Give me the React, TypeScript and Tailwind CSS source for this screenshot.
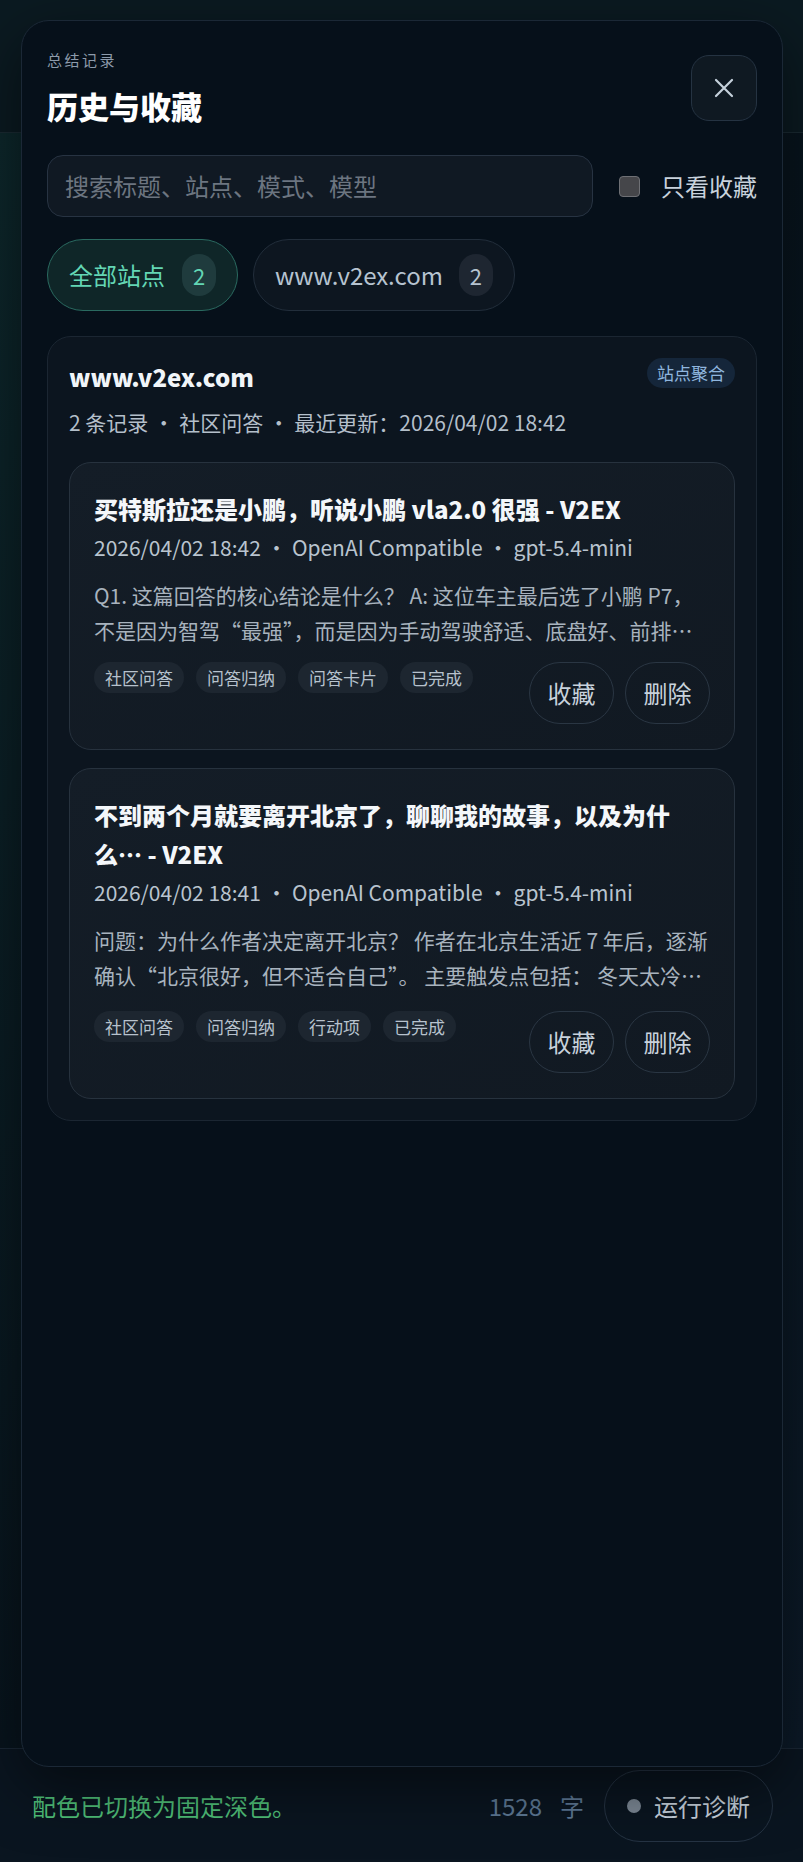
import React from "react";

const FONT = { fontFamily: '"Noto Sans CJK SC", "Noto Sans", sans-serif' };

function Sep() {
  return <span className="mx-[5px]">·</span>;
}

type Entry = {
  title: string;
  time: string;
  summary: string;
  tags: string[];
  tagGap: string;
};

const entries: Entry[] = [
  {
    title: "买特斯拉还是小鹏，听说小鹏 vla2.0 很强 - V2EX",
    time: "2026/04/02 18:42",
    summary:
      "Q1. 这篇回答的核心结论是什么？ A: 这位车主最后选了小鹏 P7，不是因为智驾“最强”，而是因为手动驾驶舒适、底盘好、前排…",
    tags: ["社区问答", "问答归纳", "问答卡片", "已完成"],
    tagGap: "mt-[14px]",
  },
  {
    title: "不到两个月就要离开北京了，聊聊我的故事，以及为什么… - V2EX",
    time: "2026/04/02 18:41",
    summary:
      "问题：为什么作者决定离开北京？ 作者在北京生活近 7 年后，逐渐确认“北京很好，但不适合自己”。 主要触发点包括： 冬天太冷…",
    tags: ["社区问答", "问答归纳", "行动项", "已完成"],
    tagGap: "mt-[18px]",
  },
];

function EntryCard({ e }: { e: Entry }) {
  return (
    <div className="rounded-[22px] border border-[#27323e] bg-gradient-to-br from-[#141d27] to-[#111922] px-[24px] pt-[26px] pb-[25px]">
      <div className="text-[24px] font-extrabold leading-[39px] text-[#f4f7fa]">{e.title}</div>
      <div className="mt-[2px] text-[21px] leading-[34px] text-[#b9c4cf]">
        {e.time}
        <Sep />
        OpenAI Compatible
        <Sep />
        gpt-5.4-mini
      </div>
      <div className="mt-[14px] text-[21px] leading-[35px] text-[#a8b3be]">{e.summary}</div>
      <div className={`${e.tagGap} flex items-start justify-between`}>
        <div className="flex flex-wrap gap-[12px]">
          {e.tags.map((t) => (
            <span
              key={t}
              className="h-[31px] rounded-full bg-[#1d2630] px-[11px] text-[17px] leading-[31px] text-[#b7c2cd]"
            >
              {t}
            </span>
          ))}
        </div>
        <div className="flex gap-[11px]">
          <button className="h-[62px] w-[85px] rounded-full border border-[#2a3643] text-[24px] text-[#c8d2dc]">
            收藏
          </button>
          <button className="h-[62px] w-[85px] rounded-full border border-[#2a3643] text-[24px] text-[#c8d2dc]">
            删除
          </button>
        </div>
      </div>
    </div>
  );
}

export default function App() {
  return (
    <div className="relative flex h-[1862px] w-[803px] flex-col overflow-hidden bg-[#08131c]" style={FONT}>
      {/* background page */}
      <div className="h-[133px] border-b border-[#1a2a32] bg-[#0b1a21]" />
      <div className="flex-1 bg-gradient-to-br from-[#0d272b] via-[#08141d] to-[#0c1a28]" />
      <footer className="flex h-[114px] items-center border-t border-[#1a2735] bg-[#0a1520] pl-[32px] pr-[30px]">
        <div className="flex-1 text-[24px] text-[#4fbf78]">配色已切换为固定深色。</div>
        <div className="flex items-center gap-[18px] text-[24px] text-[#5d7894]">
          <span>1528</span>
          <span>字</span>
        </div>
        <button className="ml-[20px] flex h-[72px] w-[169px] items-center rounded-full border border-[#253343] pl-[22px]">
          <span className="h-[14px] w-[14px] rounded-full bg-[#7b8794]" />
          <span className="ml-[13px] text-[24px] text-[#c8d3de]">运行诊断</span>
        </button>
      </footer>

      {/* modal */}
      <div className="absolute left-[21px] top-[20px] h-[1747px] w-[762px] rounded-[28px] border border-[#1b2836] bg-[#06101a] px-[25px] pt-[29px] shadow-[0_20px_60px_rgba(0,0,0,0.5)]">
        <div className="flex items-center justify-between">
          <div>
            <div className="text-[15px] leading-[20px] tracking-[2.5px] text-[#8d9bab]">总结记录</div>
            <div className="mt-[16px] text-[31px] font-extrabold leading-[40px] text-white">历史与收藏</div>
          </div>
          <button className="flex h-[66px] w-[66px] items-center justify-center rounded-[18px] border border-[#253342] bg-[#0f1922]">
            <svg width="20" height="20" viewBox="0 0 20 20" fill="none" stroke="#c5d1dc" strokeWidth="2.2" strokeLinecap="round">
              <path d="M2 2L18 18M18 2L2 18" />
            </svg>
          </button>
        </div>

        <div className="mt-[29px] flex items-center">
          <div className="flex h-[62px] flex-1 items-center rounded-[16px] border border-[#273342] bg-[#101923] px-[17px] text-[24px] text-[#6c7580]">
            搜索标题、站点、模式、模型
          </div>
          <div className="ml-[26px] flex items-center gap-[21px]">
            <span className="h-[21px] w-[21px] rounded-[4px] border-[1.5px] border-[#6e7075] bg-[#45464a]" />
            <span className="text-[24px] text-[#c8d2dc]">只看收藏</span>
          </div>
        </div>

        <div className="mt-[22px] flex gap-[15px]">
          <div className="flex h-[72px] items-center gap-[17px] rounded-full border border-[#2a6a60] bg-[#0f2628] px-[21px]">
            <span className="text-[24px] text-[#63d6b4]">全部站点</span>
            <span className="flex h-[42px] w-[34px] items-center justify-center rounded-full bg-[#1f3b3d] text-[22px] text-[#63d6b4]">
              2
            </span>
          </div>
          <div className="flex h-[72px] items-center gap-[16px] rounded-full border border-[#222e3b] bg-[#0d1620] px-[21px]">
            <span className="text-[24px] text-[#b6c3d0]">www.v2ex.com</span>
            <span className="flex h-[42px] w-[34px] items-center justify-center rounded-full bg-[#1e2631] text-[22px] text-[#b6c3d0]">
              2
            </span>
          </div>
        </div>

        <div className="mt-[25px] rounded-[24px] border border-[#1b2632] bg-[#0c151f] p-[21px]">
          <div className="flex items-start justify-between">
            <div>
              <div className="text-[24px] font-extrabold leading-[38px] text-[#f1f5f9]">www.v2ex.com</div>
              <div className="mt-[10px] text-[21px] leading-[32px] text-[#b4bfca]">
                2 条记录
                <Sep />
                社区问答
                <Sep />
                最近更新：2026/04/02 18:42
              </div>
            </div>
            <span className="h-[30px] rounded-full bg-[#15263a] px-[10px] text-[17px] leading-[30px] text-[#8fb6df]">
              站点聚合
            </span>
          </div>
          <div className="mt-[24px] flex flex-col gap-[18px]">
            {entries.map((e) => (
              <EntryCard key={e.time} e={e} />
            ))}
          </div>
        </div>
      </div>
    </div>
  );
}
